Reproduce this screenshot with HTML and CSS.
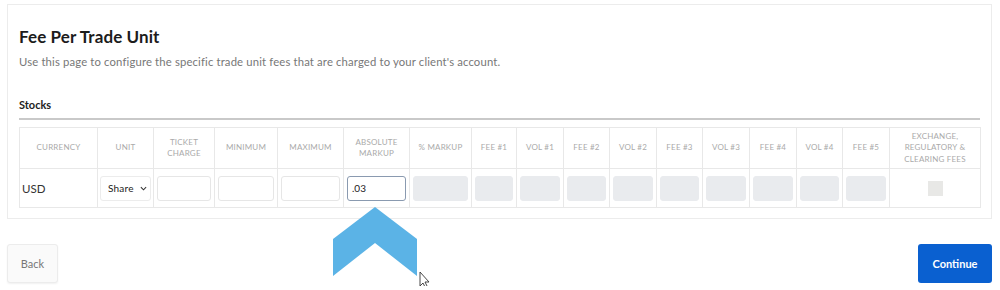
FILE: index.html
```html
<!DOCTYPE html>
<html>
<head>
<meta charset="utf-8">
<link rel="stylesheet" href="styles.css">
</head>
<body>
<div class="page">
  <section class="card">
    <h1 class="title">Fee Per Trade Unit</h1>
    <p class="subtitle">Use this page to configure the specific trade unit fees that are charged to your client's account.</p>
    <h2 class="section">Stocks</h2>
    <table class="fees">
      <colgroup>
        <col style="width:78px"><col style="width:56px"><col style="width:61px"><col style="width:63px"><col style="width:66px"><col style="width:66px"><col style="width:62px"><col style="width:45px"><col style="width:47px"><col style="width:46px"><col style="width:47px"><col style="width:46px"><col style="width:47px"><col style="width:47px"><col style="width:46px"><col style="width:47px"><col style="width:91px">
      </colgroup>
      <thead>
        <tr>
          <th>Currency</th><th>Unit</th><th>Ticket<br>Charge</th><th>Minimum</th><th>Maximum</th><th>Absolute<br>Markup</th><th>% Markup</th><th>Fee #1</th><th>Vol #1</th><th>Fee #2</th><th>Vol #2</th><th>Fee #3</th><th>Vol #3</th><th>Fee #4</th><th>Vol #4</th><th>Fee #5</th><th>Exchange,<br>Regulatory &amp;<br>Clearing Fees</th>
        </tr>
      </thead>
      <tbody>
        <tr>
          <td class="cur">USD</td>
          <td><div class="select"><span>Share</span><svg class="chev" viewBox="0 0 8 5" width="7" height="5"><path d="M1 1 L4 4 L7 1" fill="none" stroke="#333" stroke-width="1.2"/></svg></div></td>
          <td><div class="inp"></div></td>
          <td><div class="inp"></div></td>
          <td><div class="inp"></div></td>
          <td><div class="inp focus">.03</div></td>
          <td><div class="inp dis"></div></td>
          <td><div class="inp dis"></div></td>
          <td><div class="inp dis"></div></td>
          <td><div class="inp dis"></div></td>
          <td><div class="inp dis"></div></td>
          <td><div class="inp dis"></div></td>
          <td><div class="inp dis"></div></td>
          <td><div class="inp dis"></div></td>
          <td><div class="inp dis"></div></td>
          <td><div class="inp dis"></div></td>
          <td><div class="check"></div></td>
        </tr>
      </tbody>
    </table>
  </section>
  <div class="actions">
    <button class="btn back">Back</button>
    <button class="btn primary">Continue</button>
  </div>
  <svg class="pointer" width="100" height="80" viewBox="0 0 100 80">
    <polygon points="0,33 42,1 84,33 84,70 42,37 0,70" fill="#5bb3e6"/>
    <path d="M87 66 L87 80 L90 77 L93 83 L95 82 L92 76 L96 76 Z" fill="#fff" stroke="#333" stroke-width="0.9"/>
  </svg>
</div>
</body>
</html>
```

FILE: styles.css
```css
* { box-sizing: border-box; }
html, body { margin: 0; padding: 0; background: #fff; }
body { font-family: "Lato", "Open Sans", sans-serif; color: #222; }
.page { position: relative; width: 1000px; height: 290px; padding: 4px 8px 0 7px; }
.card {
  border: 1px solid #ececec;
  height: 215px;
  padding: 22px 11px 0 11px;
}
.title { margin: 0; font-size: 17px; font-weight: 700; color: #1c1c1c; line-height: 20px; letter-spacing: 0.1px; }
.subtitle { margin: 8px 0 0; font-size: 11.3px; color: #777; line-height: 14px; letter-spacing: 0.15px; }
.section {
  margin: 29px 0 0; font-size: 11px; font-weight: 700; color: #222;
  padding-bottom: 6px; border-bottom: 2px solid #c9c9c9; line-height: 14px;
}
.fees {
  margin-top: 7px;
  border-collapse: collapse;
  table-layout: fixed;
  width: 961px;
}
.fees th, .fees td { border: 1px solid #e8e8e8; }
.fees th {
  height: 41px; padding: 0 2px;
  font-size: 8px; font-weight: 400; color: #aaa; text-transform: uppercase;
  text-align: center; line-height: 11.5px; letter-spacing: 0.2px;
}
.fees td { height: 39px; padding: 0 3px; }
.fees td.cur { font-size: 11.5px; color: #333; padding-left: 2px; }
.inp {
  height: 25px; border: 1px solid #e6e6e6; border-radius: 3px; background: #fff;
  font-size: 10px; color: #222; line-height: 23px; padding-left: 4px;
}
.inp.focus { border-color: #8a9ab0; }
.inp.dis { background: #e9ebee; border-color: #e9ebee; }
.select {
  height: 25px; border: 1px solid #ececec; border-radius: 3px; margin: 0 -1px;
  display: flex; align-items: center; justify-content: space-between;
  font-size: 10px; color: #222; padding: 0 3px 0 7px; letter-spacing: 0.2px;
}
.chev { display: block; }
.check { width: 15px; height: 15px; background: #e8e8e6; margin: 0 auto; }
.actions {
  display: flex; justify-content: space-between; align-items: center;
  margin-top: 25px;
}
.btn {
  height: 39px; border-radius: 3px; font-family: inherit; font-size: 11px; cursor: pointer;
}
.back { width: 51px; background: #fafafa; border: 1px solid #ececec; color: #777; box-shadow: 0 1px 2px rgba(0,0,0,0.06); }
.primary { width: 74px; background: #0a60d0; border: 0; color: #fff; font-weight: 700; }
.pointer { position: absolute; left: 333px; top: 206px; }
```
